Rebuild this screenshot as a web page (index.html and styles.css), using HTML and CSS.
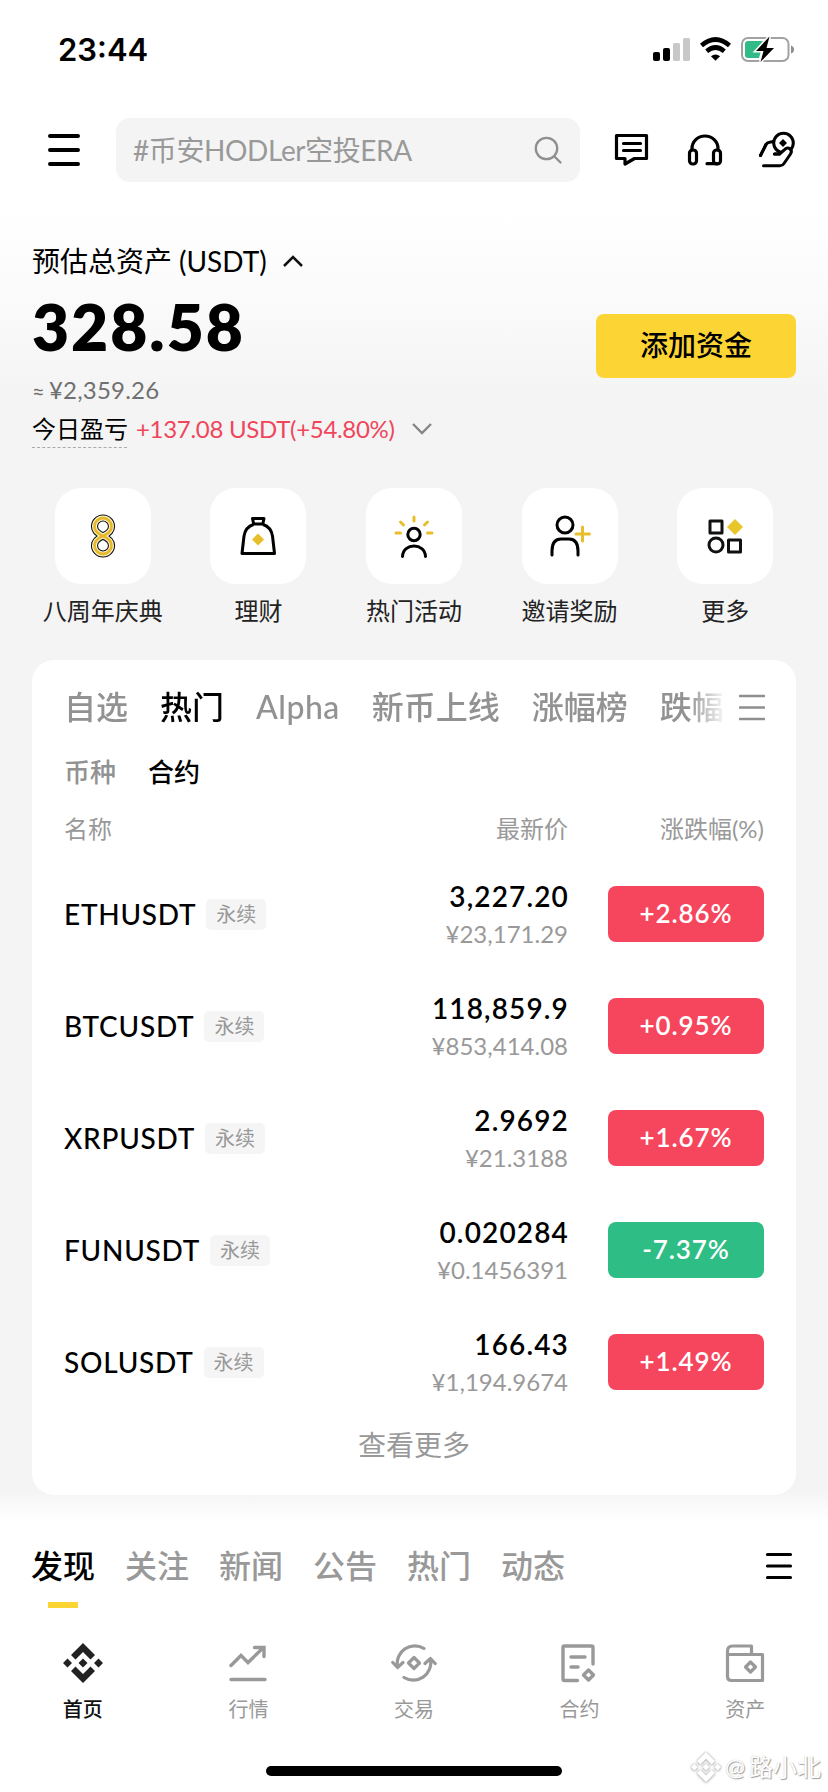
FILE: index.html
```html
<!DOCTYPE html>
<html lang="zh-CN">
<head>
<meta charset="utf-8">
<title>首页</title>
<link rel="stylesheet" href="styles.css">
</head>
<body>
<div class="screen">
  <div class="status">
    <span class="clock">23:44</span>
    <svg class="status-icons" width="144" height="28" viewBox="0 0 144 28">
      <rect x="1" y="16" width="7" height="9" rx="2"/>
      <rect x="11" y="12" width="7" height="13" rx="2"/>
      <rect x="21" y="7" width="7" height="18" rx="1.5" fill="#c8c8c8"/>
      <rect x="31" y="2" width="7" height="23" rx="1.5" fill="#c8c8c8"/>
      <g fill="none" stroke="#000" stroke-width="4.6">
        <path d="M49.5 9.6Q63.5 -2.6 77.5 9.6"/>
        <path d="M54.7 15.2Q63.5 7.8 72.3 15.2"/>
      </g>
      <path d="M58.9 20.2Q63.5 16.6 68.1 20.2L63.5 24.8Z"/>
      <rect x="90" y="2" width="46.5" height="23" rx="6" fill="none" stroke="#a2a2a2" stroke-width="2"/>
      <path d="M96 5H111L104 15H109L107 22H96Q93 22 93 19V8Q93 5 96 5Z" fill="#33bb87"/>
      <path d="M139 9.5Q142 10.5 142 13.5T139 17.5Z" fill="#8e8e8e"/>
      <path d="M117.5 .5L104 15H111.5L108.5 26L122 12H114.5Z" stroke="#fff" stroke-width="3" paint-order="stroke"/>
    </svg>
  </div>

  <header class="topbar">
    <svg width="32" height="32" viewBox="0 0 32 32"><path d="M2 2H30M2 16H30M2 30H30" stroke="#000" stroke-width="4" stroke-linecap="round"/></svg>
    <div class="search">
      <span class="search-text">#币安HODLer空投ERA</span>
      <svg width="28" height="28" viewBox="0 0 28 28" fill="none" stroke="#8f8f8f" stroke-width="2.3" stroke-linecap="round"><circle cx="12.5" cy="12.5" r="10.7"/><path d="M20.5 20.5L26.5 26.5"/></svg>
    </div>
    <div class="tools">
      <svg width="36" height="36" viewBox="0 0 36 36" fill="none" stroke="#000" stroke-width="3.2" stroke-linejoin="round" stroke-linecap="round"><path d="M2.5 3.5H32.5V26.5H20.5L11 32V26.5H2.5Z"/><path d="M9.5 11.5H26.5M9.5 18.5H26.5"/></svg>
      <svg width="36" height="36" viewBox="0 0 36 36" fill="none" stroke="#000" stroke-width="3.2" stroke-linecap="round" stroke-linejoin="round"><path d="M5 18V16.5A13 12.5 0 0 1 31 16.5V18"/><rect x="2.5" y="18" width="7" height="14" rx="3.2"/><rect x="26.500" y="18" width="7" height="14" rx="3.2"/><path d="M20 31.7H30"/></svg>
      <svg width="36" height="38" viewBox="0 0 36 38" fill="none" stroke="#000" stroke-width="3" stroke-linecap="round" stroke-linejoin="round"><path d="M1.500 24.500L7 13.500Q8 11.500 10.500 11.200L14.500 10.500"/><circle cx="24.500" cy="12" r="9.800"/><path d="M15.500 23H20.500L26.500 17.800Q29 16.200 31 18Q33.500 20 31.500 23L25 32.500Q23.500 34.800 21 34.800H4.500" fill="#fff"/><path d="M1.500 24.500L7 13.500M15.500 23H20.500" /><path d="M24 8L28 12L24 16L20 12Z" fill="#000" stroke="none"/></svg>
    </div>
  </header>

  <section class="assets">
    <div class="assets-title">预估总资产<span class="unit">(USDT)</span>
      <svg width="20" height="12" viewBox="0 0 20 12" fill="none" stroke="#111" stroke-width="2.5"><path d="M1 11L10 2L19 11"/></svg>
    </div>
    <div class="balance-row">
      <div class="balance">328.58</div>
      <div class="deposit">添加资金</div>
    </div>
    <div class="approx"><span class="tilde">≈</span>¥2,359.26</div>
    <div class="pnl"><span class="pnl-label">今日盈亏</span><span class="pnl-value">+137.08 USDT(+54.80%)</span>
      <svg width="20" height="12" viewBox="0 0 20 12" fill="none" stroke="#858585" stroke-width="2.3"><path d="M1 1L10 10L19 1"/></svg>
    </div>
  </section>

  <nav class="shortcuts">
    <div class="shortcut">
      <div class="tile"><svg width="26" height="44" viewBox="0 0 26 44" fill="none">
        <defs><path id="eight" d="M13 22C8 19.800 4.500 17 4.500 12.500A8.500 8.500 0 0 1 21.500 12.500C21.500 17 18 19.800 13 22C8 24.200 4.500 27 4.500 31.500A8.500 8.500 0 0 0 21.500 31.500C21.500 27 18 24.200 13 22"/></defs>
        <use href="#eight" stroke="#111" stroke-width="7.200"/><use href="#eight" stroke="#fff5cf" stroke-width="5"/><use href="#eight" stroke="#e6b92b" stroke-width="2.800"/></svg></div>
      <span>八周年庆典</span>
    </div>
    <div class="shortcut">
      <div class="tile"><svg width="36" height="40" viewBox="0 0 36 40" fill="none" stroke="#000" stroke-width="3" stroke-linejoin="round"><path d="M12.500 2.500H24L22.800 8H13.700Z"/><path d="M13.500 8.500Q5.500 11 4 20L2 37.500H34.500L32.500 20Q31 11 23 8.500"/><path d="M18 17.500L24 23.500L18 29.500L12 23.500Z" fill="#e8bf2a" stroke="none"/></svg></div>
      <span>理财</span>
    </div>
    <div class="shortcut">
      <div class="tile"><svg width="42" height="44" viewBox="0 0 42 44" fill="none" stroke-width="3" stroke-linecap="round"><circle cx="21" cy="20.500" r="6.200" stroke="#000"/><path d="M9.500 42.500C10 28.500 32 28.500 32.500 42.500" stroke="#000"/><path d="M21 3V7M7.500 8L10.500 11M34.500 8L31.500 11M3 19H7.500M34.500 19H39" stroke="#e8bf2a"/></svg></div>
      <span>热门活动</span>
    </div>
    <div class="shortcut">
      <div class="tile"><svg width="42" height="42" viewBox="0 0 42 42" fill="none" stroke-width="3" stroke-linecap="round"><circle cx="16" cy="10" r="8" stroke="#000"/><path d="M3 40V36Q3 24 12 24H20Q29 24 29 36V40" stroke="#000"/><path d="M27 19H40.5M33.5 12V26" stroke="#e8bf2a"/></svg></div>
      <span>邀请奖励</span>
    </div>
    <div class="shortcut">
      <div class="tile"><svg width="36" height="36" viewBox="0 0 36 36" fill="none" stroke="#111" stroke-width="3" stroke-linejoin="round"><rect x="3" y="3" width="12" height="12"/><circle cx="9" cy="27" r="7"/><rect x="21.5" y="22" width="12" height="12"/><path d="M28 1L36 9L28 17L20 9Z" fill="#e8c62a" stroke="none"/></svg></div>
      <span>更多</span>
    </div>
  </nav>

  <section class="market">
    <div class="market-head">
      <div class="market-tabs">
        <span>自选</span><span class="on">热门</span><span class="alpha">Alpha</span><span>新币上线</span><span>涨幅榜</span><span>跌幅</span>
      </div>
      <svg width="26" height="28" viewBox="0 0 26 28"><path d="M1 3H25M1 14.5H25M1 26H25" stroke="#8f8f8f" stroke-width="2.6" stroke-linecap="round"/></svg>
    </div>
    <div class="subtabs"><span>币种</span><span class="on">合约</span></div>
    <div class="cols"><span>名称</span><span class="r">最新价</span><span class="r">涨跌幅(%)</span></div>
    <div class="row">
      <div class="pair"><span class="sym">ETHUSDT</span><span class="tag">永续</span></div>
      <div class="prices"><b>3,227.20</b><i>¥23,171.29</i></div>
      <div class="chg">+2.86%</div>
    </div>
    <div class="row">
      <div class="pair"><span class="sym">BTCUSDT</span><span class="tag">永续</span></div>
      <div class="prices"><b>118,859.9</b><i>¥853,414.08</i></div>
      <div class="chg">+0.95%</div>
    </div>
    <div class="row">
      <div class="pair"><span class="sym">XRPUSDT</span><span class="tag">永续</span></div>
      <div class="prices"><b>2.9692</b><i>¥21.3188</i></div>
      <div class="chg">+1.67%</div>
    </div>
    <div class="row">
      <div class="pair"><span class="sym">FUNUSDT</span><span class="tag">永续</span></div>
      <div class="prices"><b>0.020284</b><i>¥0.1456391</i></div>
      <div class="chg down">-7.37%</div>
    </div>
    <div class="row">
      <div class="pair"><span class="sym">SOLUSDT</span><span class="tag">永续</span></div>
      <div class="prices"><b>166.43</b><i>¥1,194.9674</i></div>
      <div class="chg">+1.49%</div>
    </div>
    <div class="more">查看更多</div>
  </section>

  <div class="feed">
    <div class="feed-tabs"><span class="on">发现</span><span>关注</span><span>新闻</span><span>公告</span><span>热门</span><span>动态</span></div>
    <svg width="28" height="28" viewBox="0 0 28 28"><path d="M2.5 2.5H25.5M2.5 14H25.5M2.5 25.5H25.5" stroke="#000" stroke-width="3.2" stroke-linecap="round"/></svg>
  </div>

  <nav class="bottom">
    <div class="item on">
      <svg width="40" height="40" viewBox="0 0 40 40" fill="#222"><path d="M20 0L32 12L27.5 16.5L20 9L12.5 16.5L8 12Z"/><path d="M20 40L32 28L27.5 23.5L20 31L12.5 23.5L8 28Z"/><path d="M20 15.5L24.5 20L20 24.5L15.5 20ZM4.5 15.5L9 20L4.5 24.5L0 20ZM35.5 15.5L40 20L35.5 24.5L31 20Z"/></svg>
      <span>首页</span>
    </div>
    <div class="item">
      <svg width="40" height="40" viewBox="0 0 40 40" fill="none" stroke="#999" stroke-width="3.4" stroke-linecap="round"><path d="M3 22.5L13 12.5L20 19.5L35 5M26.5 4.500H36V13.5M3 36.500H37"/></svg>
      <span>行情</span>
    </div>
    <div class="item">
      <svg width="46" height="40" viewBox="0 0 46 40" fill="none" stroke="#999" stroke-width="3.2" stroke-linecap="round" stroke-linejoin="round"><path d="M33 5.500A17.500 17.500 0 0 0 6.500 23.500M1.800 19.500L6.500 24.500L12 19.500"/><path d="M13 34.500A17.500 17.500 0 0 0 39.500 16.500M34 20.500L39.500 15.500L44.200 20.500"/><path d="M23 14.500L28.500 20L23 25.500L17.500 20Z"/></svg>
      <span>交易</span>
    </div>
    <div class="item">
      <svg width="40" height="40" viewBox="0 0 40 40" fill="none" stroke="#999" stroke-width="3.4" stroke-linecap="round" stroke-linejoin="round"><path d="M17.500 37.5H4.500Q3 37.5 3 36V4.5Q3 3 4.500 3H31.500Q33 3 33 4.5V21M11 14H25M11 24H18M28.500 27L33.500 32L28.500 37L23.500 32Z"/></svg>
      <span>合约</span>
    </div>
    <div class="item">
      <svg width="40" height="40" viewBox="0 0 40 40" fill="none" stroke="#999" stroke-width="3.2" stroke-linejoin="round"><path d="M2.500 12V8Q2.500 3 7.500 3H26.500V11.5"/><path d="M2.5 11.500H37.500V37.500H6.500Q2.500 37.500 2.500 33.500Z"/><path d="M25.500 19L30.500 24L25.500 29L20.500 24Z"/></svg>
      <span>资产</span>
    </div>
  </nav>
  <div class="home-bar"></div>
  <div class="watermark">
    <svg width="30" height="30" viewBox="0 0 40 40" fill="#fff"><path d="M20 0L32 12L27.5 16.5L20 9L12.5 16.5L8 12Z"/><path d="M20 40L32 28L27.5 23.5L20 31L12.5 23.5L8 28Z"/><path d="M20 15.5L24.5 20L20 24.5L15.5 20ZM4.5 15.5L9 20L4.5 24.5L0 20ZM35.5 15.5L40 20L35.5 24.5L31 20Z"/></svg>
    <span>@</span><span>路小北</span>
  </div>
</div>
</body>
</html>
```

FILE: styles.css
```css
* { box-sizing: border-box; }
body {
  margin: 0;
  background: #fff;
  font-family: Lato, "Noto Sans CJK SC", sans-serif;
  color: #000;
}
svg { display: block; flex: none; }
span { white-space: nowrap; }
.screen {
  position: relative;
  width: 828px;
  height: 1792px;
  overflow: hidden;
  display: flex;
  flex-direction: column;
  background: linear-gradient(#fff 0, #fff 210px, #fbfbfb 290px, #f4f4f4 400px, #f4f4f4 1490px, #fff 1522px);
}

.status {
  height: 100px;
  padding: 0 32px 0 58px;
  display: flex;
  align-items: center;
  justify-content: space-between;
}
.clock { font: 600 31px/40px Inter, sans-serif; }

.topbar {
  height: 100px;
  padding: 0 33px 0 48px;
  display: flex;
  align-items: center;
}
.search {
  width: 464px;
  height: 64px;
  margin-left: 36px;
  padding: 0 18px 0 17px;
  border-radius: 14px;
  background: #f4f4f4;
  display: flex;
  align-items: center;
  justify-content: space-between;
}
.search-text { font-size: 28px; line-height: 40px; letter-spacing: -0.4px; color: #999; }
.tools { flex: 1; display: flex; align-items: center; justify-content: space-between; padding-left: 34px; }

.assets { height: 272px; padding: 40px 32px 0; }
.assets-title { height: 42px; font-size: 28px; line-height: 42px; display: flex; align-items: center; }
.unit { margin: 0 16px 0 7px; }
.balance-row { height: 96px; display: flex; align-items: center; justify-content: space-between; }
.balance { margin-top: -7px; font-size: 64px; font-weight: 800; line-height: 80px; letter-spacing: 2px; }
.deposit {
  width: 200px;
  height: 64px;
  margin-top: 32px;
  border-radius: 8px;
  background: #fcd535;
  font-size: 28px;
  font-weight: 500;
  line-height: 62px;
  text-align: center;
}
.approx { height: 30px; font-size: 24px; line-height: 24px; letter-spacing: 0.2px; color: #707070; }
.tilde { font-size: 22px; margin-right: 4px; }
.pnl { height: 42px; display: flex; align-items: center; font-size: 24px; line-height: 36px; }
.pnl-label { width: 95px; border-bottom: 1px dashed #aaa; margin-right: 9px; }
.pnl-value { color: #f0465c; letter-spacing: -0.3px; margin-right: 17px; }

.shortcuts { height: 188px; padding: 16px 25px 0; display: grid; grid-template-columns: repeat(5, 1fr); }
.shortcut { display: flex; flex-direction: column; align-items: center; font-size: 24px; line-height: 36px; color: #222; }
.tile {
  width: 96px;
  height: 96px;
  margin-bottom: 9px;
  border-radius: 26px;
  background: #fff;
  display: flex;
  align-items: center;
  justify-content: center;
}

.market {
  height: 835px;
  margin: 0 32px;
  padding: 0 32px;
  border-radius: 22px;
  background: #fff;
}
.market-head { height: 84px; padding-top: 10px; display: flex; align-items: center; justify-content: space-between; }
.market-tabs {
  width: 664px;
  display: flex;
  gap: 32px;
  font-size: 32px;
  font-weight: 500;
  line-height: 48px;
  color: #929292;
  -webkit-mask-image: linear-gradient(90deg, #000 624px, transparent 663px);
  mask-image: linear-gradient(90deg, #000 624px, transparent 663px);
}
.market-head svg { margin-right: -1px; }
.alpha { letter-spacing: 0.5px; }
.on { color: #000; }
.subtabs { height: 52px; display: flex; align-items: center; gap: 32px; font-size: 26px; font-weight: 500; color: #929292; }
.cols {
  height: 62px;
  display: grid;
  grid-template-columns: 1fr 160px 196px;
  align-items: center;
  font-size: 24px;
  color: #999;
}
.r { text-align: right; }
.row { height: 112px; display: flex; align-items: center; }
.pair { flex: 1; display: flex; align-items: center; gap: 10px; }
.sym { font-size: 28px; line-height: 40px; font-weight: 500; letter-spacing: 0.75px; }
.tag { height: 31px; padding: 0 10px; border-radius: 5px; background: #f5f5f5; color: #999; font-size: 20px; line-height: 30px; }
.prices { display: flex; flex-direction: column; align-items: flex-end; margin-right: 40px; padding-top: 2px; line-height: 38px; }
.prices b { font-size: 28px; font-weight: 600; letter-spacing: 1.15px; margin-right: -1px; }
.prices i { font-size: 24px; font-style: normal; color: #999; }
.chg {
  width: 156px;
  height: 56px;
  border-radius: 8px;
  background: #f6465d;
  color: #fff;
  font-size: 26px;
  font-weight: 600;
  line-height: 55px;
  letter-spacing: 0.9px;
  text-align: center;
}
.down { background: #2ebd85; }
.more { padding-top: 6px; font-size: 28px; line-height: 42px; text-align: center; color: #999; }

.feed { height: 118px; margin-top: 25px; padding: 22px 35px 0 31px; display: flex; justify-content: space-between; align-items: flex-start; }
.feed-tabs { display: flex; gap: 30px; font-size: 32px; font-weight: 500; line-height: 48px; color: #999; }
.feed svg { margin-top: 10px; }
.feed-tabs .on { display: flex; flex-direction: column; align-items: center; }
.feed-tabs .on::after { content: ""; width: 30px; height: 6px; margin-top: 12px; background: #fcd535; }

.bottom { height: 128px; display: grid; grid-template-columns: repeat(5, 1fr); padding-top: 5px; }
.item { display: flex; flex-direction: column; align-items: center; gap: 11px; font-size: 20px; line-height: 30px; color: #999; }
.item.on { color: #111; font-weight: 500; }
.home-bar { width: 296px; height: 10px; margin: 0 auto; border-radius: 5px; background: #000; }
.watermark {
  position: absolute;
  right: 7px;
  bottom: 7px;
  display: flex;
  align-items: center;
  gap: 4px;
  color: #fff;
  font-size: 24px;
  line-height: 36px;
  text-shadow: 0 0 1px #bbb, 1px 1px 1px #999;
}
.watermark svg { filter: drop-shadow(0 0 1px #aaa) drop-shadow(0 1px 1px #ccc); }
```
